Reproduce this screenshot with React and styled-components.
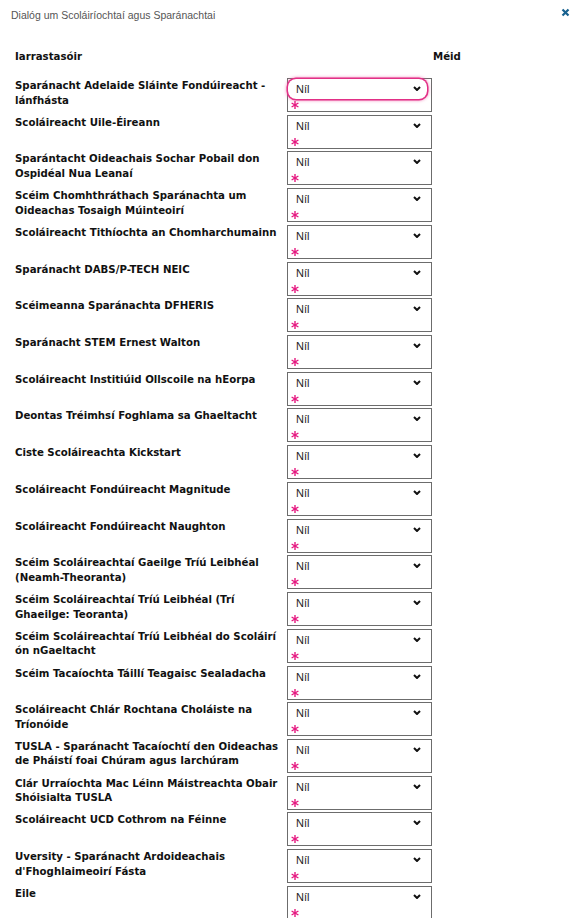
import React from "react";
import styled, { createGlobalStyle } from "styled-components";

const GlobalStyle = createGlobalStyle`
  html, body { margin: 0; padding: 0; background: #fff; }
  body { font-family: "Liberation Sans", Arial, sans-serif; color: #111; }
`;

const Dialog = styled.div`
  width: 571px;
  box-sizing: border-box;
`;

const TitleBar = styled.div`
  display: flex;
  justify-content: space-between;
  align-items: center;
  height: 30px;
  padding: 0 1px 0 11px;
`;

const Title = styled.span`
  font-size: 10.5px;
  color: #555;
`;

const Close = styled.button`
  border: none;
  background: none;
  padding: 0;
  width: 9px;
  height: 9px;
  margin-top: -5px;
  display: flex;
  cursor: pointer;
`;

const Table = styled.div`
  padding: 20px 0 0 15px;
`;

const Grid = styled.div`
  display: grid;
  grid-template-columns: 272px 145px auto;
  align-items: start;
  padding-bottom: ${(p) => p.$pb || 0}px;
`;

const HeadCell = styled.div`
  font-family: "DejaVu Sans", Verdana, sans-serif;
  font-weight: bold;
  font-size: 10.2px;
  line-height: 14px;
  padding-left: ${(p) => p.$pl || 0}px;
`;

const Label = styled.div`
  font-family: "DejaVu Sans", Verdana, sans-serif;
  font-weight: bold;
  font-size: 10.2px;
  line-height: 14.5px;
  padding-top: 1px;
  padding-right: 6px;
`;

const Box = styled.div`
  box-sizing: border-box;
  width: 145px;
  height: 34px;
  border: 1px solid #6c6c6c;
  display: flex;
  flex-direction: column;
`;

const SelectWrap = styled.div`
  position: relative;
  height: 20px;
  margin-right: 4px;
`;

const Select = styled.select`
  appearance: none;
  -webkit-appearance: none;
  width: 100%;
  height: 20px;
  box-sizing: border-box;
  border: none;
  border-radius: 8px;
  padding: 0 0 0 8px;
  font-family: "Liberation Sans", Arial, sans-serif;
  font-size: 11px;
  color: #1e1e1e;
  background: transparent;
  outline: none;
  box-shadow: ${(p) =>
    p.$focus
      ? "0 0 0 1.5px #e22f86, 0 0 3px 2px rgba(236, 90, 160, 0.55)"
      : "none"};
`;

const Chevron = styled.svg`
  position: absolute;
  right: 6px;
  top: 7px;
  width: 8px;
  height: 5px;
  pointer-events: none;
`;

const Star = styled.svg`
  width: 8px;
  height: 8px;
  margin: 2px 0 0 3px;
`;

const rows = [
  "Sparánacht Adelaide Sláinte Fondúireacht - lánfhásta",
  "Scoláireacht Uile-Éireann",
  "Sparántacht Oideachais Sochar Pobail don Ospidéal Nua Leanaí",
  "Scéim Chomhthráthach Sparánachta um Oideachas Tosaigh Múinteoirí",
  "Scoláireacht Tithíochta an Chomharchumainn",
  "Sparánacht DABS/P-TECH NEIC",
  "Scéimeanna Sparánachta DFHERIS",
  "Sparánacht STEM Ernest Walton",
  "Scoláireacht Institiúid Ollscoile na hEorpa",
  "Deontas Tréimhsí Foghlama sa Ghaeltacht",
  "Ciste Scoláireachta Kickstart",
  "Scoláireacht Fondúireacht Magnitude",
  "Scoláireacht Fondúireacht Naughton",
  "Scéim Scoláireachtaí Gaeilge Tríú Leibhéal (Neamh-Theoranta)",
  "Scéim Scoláireachtaí Tríú Leibhéal (Trí Ghaeilge: Teoranta)",
  "Scéim Scoláireachtaí Tríú Leibhéal do Scoláirí ón nGaeltacht",
  "Scéim Tacaíochta Táillí Teagaisc Sealadacha",
  "Scoláireacht Chlár Rochtana Choláiste na Tríonóide",
  "TUSLA - Sparánacht Tacaíochtí den Oideachas de Pháistí foai Chúram agus Iarchúram",
  "Clár Urraíochta Mac Léinn Máistreachta Obair Shóisialta TUSLA",
  "Scoláireacht UCD Cothrom na Féinne",
  "Uversity - Sparánacht Ardoideachais d'Fhoghlaimeoirí Fásta",
  "Eile",
];

const Field = ({ focus }) => (
  <Box>
    <SelectWrap>
      <Select $focus={focus} defaultValue="nil">
        <option value="nil">Níl</option>
        <option value="ta">Tá</option>
      </Select>
      <Chevron viewBox="0 0 8 5">
        <polyline points="1,1 4,4 7,1" fill="none" stroke="#111" strokeWidth="2" />
      </Chevron>
    </SelectWrap>
    <Star viewBox="0 0 8 8">
      <g stroke="#e5177f" strokeWidth="1.4" strokeLinecap="butt">
        <line x1="4" y1="0" x2="4" y2="8" />
        <line x1="0.6" y1="2" x2="7.4" y2="6" />
        <line x1="0.6" y1="6" x2="7.4" y2="2" />
      </g>
    </Star>
  </Box>
);

export default function App() {
  return (
    <>
      <GlobalStyle />
      <Dialog>
        <TitleBar>
          <Title>Dialóg um Scoláiríochtaí agus Sparánachtai</Title>
          <Close aria-label="Dún">
            <svg viewBox="0 0 9 9" width="9" height="9">
              <path d="M1.5 1.5 L7.5 7.5 M7.5 1.5 L1.5 7.5" stroke="#17618f" strokeWidth="2.2" />
            </svg>
          </Close>
        </TitleBar>
        <Table>
          <Grid $pb={14}>
            <HeadCell>Iarrastasóir</HeadCell>
            <div />
            <HeadCell $pl={1}>Méid</HeadCell>
          </Grid>
          {rows.map((r, i) => (
            <Grid key={i} $pb={2.73}>
              <Label>{r}</Label>
              <Field focus={i === 0} />
            </Grid>
          ))}
        </Table>
      </Dialog>
    </>
  );
}
